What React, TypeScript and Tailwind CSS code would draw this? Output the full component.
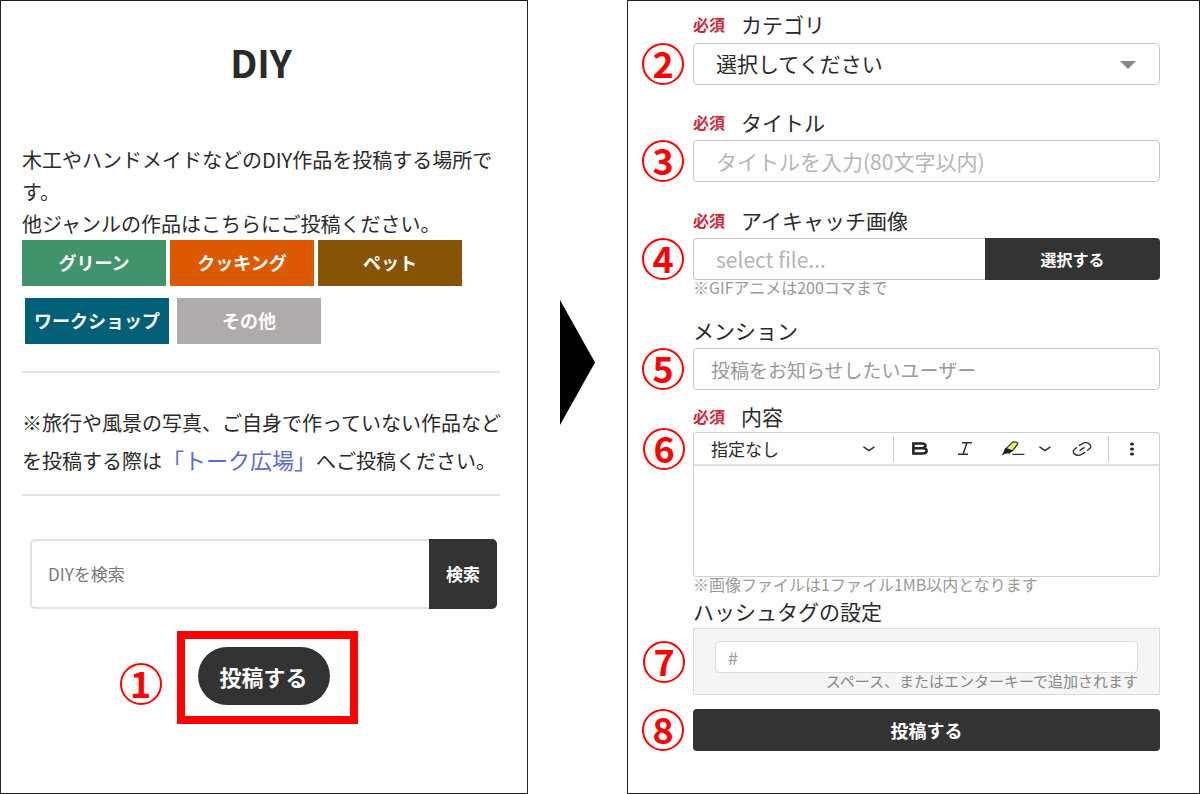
import type { ReactNode } from "react";

const GENRE_ROWS = [
  {
    row: "gap-1",
    items: [
      { label: "グリーン", color: "bg-[#41936c]" },
      { label: "クッキング", color: "bg-[#dd5900]" },
      { label: "ペット", color: "bg-[#875305]" },
    ],
  },
  {
    row: "gap-2 pl-[3px]",
    items: [
      { label: "ワークショップ", color: "bg-[#025f78]" },
      { label: "その他", color: "bg-[#b0abab]" },
    ],
  },
];

const BOX = "h-[42px] w-full rounded-[4px] border border-[#c8c8c8] bg-white";

// Red circled step number that hangs off the left side of its control.
function Step({ n, className }: { n: number; className: string }) {
  return (
    <span
      className={`pointer-events-none absolute right-full flex size-[42px] items-center justify-center rounded-full border-2 border-[#f00] pb-1 text-[36px] leading-none font-bold text-[#f00] ${className}`}
    >
      {n}
    </span>
  );
}

function FieldStep({ n }: { n: number }) {
  return <Step n={n} className="top-1/2 mr-[9px] -translate-y-1/2" />;
}

function FieldLabel({
  htmlFor,
  required,
  children,
}: {
  htmlFor: string;
  required?: boolean;
  children: ReactNode;
}) {
  return (
    <label
      htmlFor={htmlFor}
      className="flex h-6 items-center gap-4 text-[21px] leading-6 whitespace-nowrap"
    >
      {required && (
        <span className="text-base leading-6 font-bold text-[#d0283c]">必須</span>
      )}
      {children}
    </label>
  );
}

function Note({ children }: { children: ReactNode }) {
  return (
    <p className="text-base leading-[14px] whitespace-nowrap text-[#999]">{children}</p>
  );
}

function Chevron() {
  return (
    <svg
      viewBox="0 0 12 6"
      className="h-[6px] w-3 shrink-0"
      fill="none"
      stroke="#333"
      strokeWidth="1.6"
      strokeLinecap="round"
      strokeLinejoin="round"
      aria-hidden="true"
    >
      <path d="M1 1.2 6 4.6l5-3.4" />
    </svg>
  );
}

function GuidePanel() {
  return (
    <section className="border border-[#222] pr-[27px] pl-[21px]">
      <h1 className="pt-[34px] text-center text-[38px] leading-[54px] font-bold">DIY</h1>

      <p className="mt-[55px] text-xl leading-8">
        木工やハンドメイドなどのDIY作品を投稿する場所で
        <br />
        す。
        <br />
        他ジャンルの作品はこちらにご投稿ください。
      </p>
      <div className="flex flex-col gap-3">
        {GENRE_ROWS.map((group) => (
          <div key={group.row} className={`flex ${group.row}`}>
            {group.items.map((genre) => (
              <a
                key={genre.label}
                href="#"
                className={`flex h-[46px] w-[144px] items-center justify-center pb-[2px] text-lg leading-6 font-bold whitespace-nowrap text-white ${genre.color}`}
              >
                {genre.label}
              </a>
            ))}
          </div>
        ))}
      </div>

      <div className="mt-[27px] border-y-2 border-[#e4e4e2] pt-[31px] pb-[14px]">
        <p className="text-xl leading-[38px] whitespace-nowrap">
          ※旅行や風景の写真、ご自身で作っていない作品など
          <br />
          を投稿する際は
          <a href="#" className="text-[22px] leading-none text-[#5c69cf]">
            「トーク広場」
          </a>
          へご投稿ください。
        </p>
      </div>

      <form className="mt-[43px] mr-[3px] ml-2 flex h-[70px]">
        <input
          type="search"
          aria-label="DIYを検索"
          placeholder="DIYを検索"
          className="min-w-0 flex-1 rounded-l-[5px] border-2 border-r-0 border-[#e2e2e2] px-4 text-[17px] placeholder:text-[#777]"
        />
        <button
          type="button"
          className="w-[68px] rounded-r-[5px] bg-[#333] text-[17px] font-bold text-white"
        >
          検索
        </button>
      </form>

      <div className="mt-[22px] flex justify-center pl-3">
        <div className="relative border-8 border-[#f00] pt-2 pr-5 pb-[11px] pl-[13px]">
          <Step n={1} className="bottom-[11px] mr-[23px]" />
          <button
            type="button"
            className="h-[58px] w-[132px] rounded-full bg-[#333] text-[22px] font-bold text-white"
          >
            投稿する
          </button>
        </div>
      </div>
    </section>
  );
}

function Toolbar() {
  return (
    <div className="relative flex h-[33px] items-center border-b-2 border-[#dcdfe0] pr-[21px]">
      <FieldStep n={6} />
      <div className="relative flex h-full min-w-0 flex-1 items-center">
        <select
          aria-label="書式"
          className="h-full w-full appearance-none bg-transparent pl-[17px] text-[17px]"
        >
          <option>指定なし</option>
        </select>
        <span className="pointer-events-none absolute right-[18px]">
          <Chevron />
        </span>
      </div>
      <span className="h-[26px] w-px bg-[#ccc]" />
      <div className="flex items-center pl-[17px]">
        <button type="button" aria-label="太字" className="mr-7">
          <svg viewBox="0 0 18 13" className="h-[13px] w-[18px]" aria-hidden="true">
            <path
              d="M2.4 1.5h8.400c5 0 5 4.700 0 4.700H2.400zM2.400 6.200h9.200c5.400 0 5.400 5.300 0 5.300H2.400z"
              fill="none"
              stroke="#222"
              strokeWidth="2.6"
            />
          </svg>
        </button>
        <button type="button" aria-label="斜体" className="mr-7">
          <svg viewBox="0 0 16 13" className="h-[13px] w-4" aria-hidden="true">
            <path
              d="M5 .8h10M1 12.2h10M10 .8 6 12.2"
              fill="none"
              stroke="#333"
              strokeWidth="1.5"
            />
          </svg>
        </button>
        <button type="button" aria-label="ハイライト" className="mr-[14px]">
          <svg viewBox="0 0 24 15" className="h-[15px] w-6" aria-hidden="true">
            <path
              d="M5 7.6 11.4 1.4c1-.9 5.4-.2 5.4.9 0 .5-.2.8-.5 1.2L11.4 9.8z"
              fill="#eef56c"
              stroke="#333"
              strokeWidth="1.3"
              strokeLinejoin="round"
            />
            <path d="M4 7 11.6 9.8 8.8 12.4 4.8 12.6.6 14.4 2.6 11z" fill="#222" />
            <path d="M11.4 13.4h12" stroke="#333" strokeWidth="1.3" />
          </svg>
        </button>
        <button type="button" aria-label="ハイライトの色" className="mr-[21px]">
          <Chevron />
        </button>
        <button type="button" aria-label="リンク" className="mr-4">
          <svg
            viewBox="0 0 20 14"
            className="h-[14px] w-5"
            fill="none"
            stroke="#333"
            strokeWidth="1.4"
            strokeLinecap="round"
            aria-hidden="true"
          >
            <path d="M7.4 3.4 10 1.8c2.4-1.4 5.4-1.3 7.3.1s2 3.6 0 5l-1.7 1.3" />
            <path d="M12.6 10.6 10 12.2c-2.4 1.4-5.4 1.3-7.3-.1s-2-3.6 0-5l1.7-1.3" />
            <path d="m8 8.4 4-2.8" />
          </svg>
        </button>
      </div>
      <span className="h-[26px] w-px bg-[#ccc]" />
      <button type="button" aria-label="その他の項目" className="ml-[17px]">
        <svg viewBox="0 0 12 14" className="h-[14px] w-3" fill="#222" aria-hidden="true">
          <ellipse cx="6" cy="2" rx="2" ry="1.5" />
          <ellipse cx="6" cy="7" rx="2" ry="1.5" />
          <ellipse cx="6" cy="12" rx="2" ry="1.5" />
        </svg>
      </button>
    </div>
  );
}

function PostForm() {
  return (
    <form className="border border-[#222] pt-[11px] pr-[39px] pb-10 pl-[65px]">
      <FieldLabel htmlFor="category" required>
        カテゴリ
      </FieldLabel>
      <div className="relative mt-[7px]">
        <FieldStep n={2} />
        <select id="category" className={`${BOX} appearance-none pl-[22px] text-[21px]`}>
          <option>選択してください</option>
        </select>
        <svg
          viewBox="0 0 16 8"
          className="pointer-events-none absolute top-[18px] right-6 h-2 w-4"
          fill="#888"
          aria-hidden="true"
        >
          <path d="M0 0h16L8 8z" />
        </svg>
      </div>

      <div className="mt-[25px]">
        <FieldLabel htmlFor="title" required>
          タイトル
        </FieldLabel>
        <div className="relative mt-[6px]">
          <FieldStep n={3} />
          <input
            id="title"
            type="text"
            placeholder="タイトルを入力(80文字以内)"
            className={`${BOX} px-[22px] text-[21px] placeholder:text-[#b5b5b5]`}
          />
        </div>
      </div>

      <div className="mt-[26px]">
        <FieldLabel htmlFor="eyecatch" required>
          アイキャッチ画像
        </FieldLabel>
        <div className="relative mt-[6px] flex">
          <FieldStep n={4} />
          <input
            id="eyecatch"
            type="text"
            readOnly
            placeholder="select file..."
            className="h-[42px] min-w-0 flex-1 rounded-l-[4px] border border-r-0 border-[#c8c8c8] px-[22px] text-[21px] placeholder:text-[#b5b5b5]"
          />
          <button
            type="button"
            className="w-[175px] rounded-r-[4px] bg-[#333] text-base font-bold text-white"
          >
            選択する
          </button>
        </div>
        <Note>※GIFアニメは200コマまで</Note>
      </div>

      <div className="mt-6">
        <FieldLabel htmlFor="mention">メンション</FieldLabel>
        <div className="relative mt-[6px]">
          <FieldStep n={5} />
          <input
            id="mention"
            type="text"
            placeholder="投稿をお知らせしたいユーザー"
            className={`${BOX} px-[17px] text-[19px] placeholder:text-[#999]`}
          />
        </div>
      </div>

      <div className="mt-[14px]">
        <FieldLabel htmlFor="body" required>
          内容
        </FieldLabel>
        <div className="mt-1 rounded-[3px] border border-[#ccd0d2]">
          <Toolbar />
          <textarea id="body" className="block h-[110px] w-full resize-none" />
        </div>
        <Note>※画像ファイルは1ファイル1MB以内となります</Note>
      </div>

      <div className="mt-2">
        <FieldLabel htmlFor="hashtag">ハッシュタグの設定</FieldLabel>
        <div className="relative mt-[5px] border border-[#dcdcdc] bg-[#f5f5f5] px-[21px] pt-3 pb-[5px]">
          <FieldStep n={7} />
          <input
            id="hashtag"
            type="text"
            placeholder="#"
            className="block h-8 w-full rounded-[4px] border border-[#dcdcdc] bg-white px-3 text-lg placeholder:text-[#999]"
          />
          <p className="text-right text-[15px] leading-4 whitespace-nowrap text-[#888]">
            スペース、またはエンターキーで追加されます
          </p>
        </div>
      </div>

      <div className="relative mt-[14px]">
        <FieldStep n={8} />
        <button
          type="button"
          className="h-[42px] w-full rounded-[4px] bg-[#333] text-lg font-bold text-white"
        >
          投稿する
        </button>
      </div>
    </form>
  );
}

export default function App() {
  return (
    <main className="grid min-h-screen grid-cols-[minmax(0,528fr)_minmax(0,99fr)_minmax(0,573fr)] bg-white font-['Noto_Sans_CJK_JP',sans-serif] text-[#2a2a2a]">
      <GuidePanel />
      <div className="flex items-center justify-center pb-[70px]">
        <svg viewBox="0 0 35 125" className="h-[125px] w-[35px]" aria-hidden="true">
          <path d="M0 0 35 62.5 0 125z" />
        </svg>
      </div>
      <PostForm />
    </main>
  );
}
